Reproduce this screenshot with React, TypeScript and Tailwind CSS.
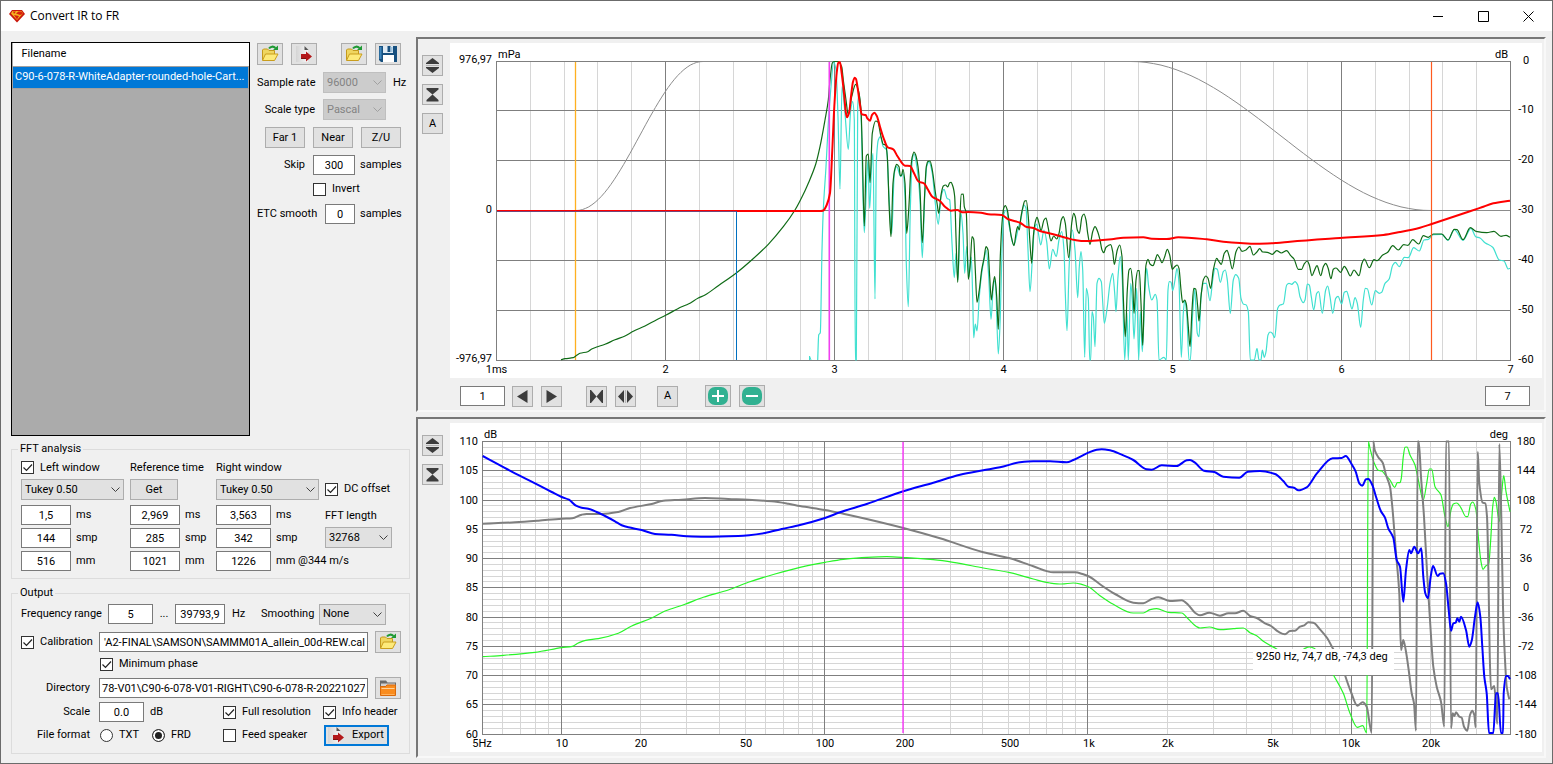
import React, { useState } from "react";

const RED =
  "497,211 800,211 821,211 823.3,210.5 826.7,205 830,193 832.3,150 834.3,106.7 836.7,73 838.3,62.5 840,62.3 841.7,73.3 844,93.3 845.7,111.7 847,117.3 849.3,111.7 851,96.7 853,81.7 854.7,77.7 856,79 857.7,88.3 860,105 861.7,114.3 865.7,115 867.3,118.3 870,120.7 872,115 874.3,112.7 876.7,115.7 880,126.7 883.3,137.3 887.7,147.3 893.3,149.3 897.3,156 905,165.7 910,166 913.3,171.7 918.7,181.7 924,183.3 927.7,189.3 932.3,196.7 939.7,200.7 945,206.7 951,210.7 957.3,210 962.3,212.3 968.3,212 981,212.7 988.3,214.3 1001.7,215 1008.3,219.3 1020,222.7 1026.7,227 1033.3,228 1040,231 1053.3,234.3 1066.7,238 1075,240 1085,241 1100,240.3 1111.7,239.3 1123.3,237.7 1143.3,237.3 1151.7,238.7 1166.7,239 1178.3,237.3 1206.7,239.3 1223.3,241.7 1240,243 1256.7,243.7 1276.7,243 1290,241.7 1340,238 1383.3,235 1400,232 1420,227.7 1431.7,224 1470,211.3 1481.7,207.3 1493.3,203.3 1510,200.7";

const ETC =
  "561,359.7 565,358.7 573.3,357.7 576.7,355.3 580,353.3 587.7,351.7 591.7,349 596.7,347 605,344.3 615,339.7 625,336 633.3,331.3 645,326 656.7,319.7 665.7,315.3 681.7,306.7 688.3,304 698.3,298 705,295 718.3,285.7 736.3,273 751.7,260 768.3,244.3 783.3,226.7 795,210 805,190.7 808.3,183.3 815.7,164.3 820,146.7 825,120 828.3,100 830,80 832.3,63 834,61.5 838,61.5 841.7,66.7 843.3,80 846,100 848.3,115 851.7,96.7 855.7,84.3 858.3,90 861,110 862.3,150 864.3,226 866.3,156 868.3,154 870,182.7 872.3,133.3 875.7,121 877.7,121.7 881,136.7 883.3,144.3 885.7,145 887.3,156.7 889.3,210 891,236.7 893,183.3 895,168.3 896.7,164.3 899,166.7 900.3,175.7 901.7,175 903,169.3 905,183.3 906.7,233.3 908.7,210 911,166.7 912.3,156.7 914,152 915.7,155 918,166.7 920,190 922.3,242.7 924.7,193.3 926.3,166.7 928,161.3 930,161 932.3,170 935,190 937.3,205 938.7,213.3 941.3,193.3 943.3,186 945.7,185 947.7,187 949.7,182.7 951,182.3 953,186.7 954.7,196.7 956,236.7 957.7,282.3 959.7,223.3 961.3,194.3 963.3,194 964.3,206.7 966.3,213 968.3,279.3 970.3,263.3 972,236.7 973.7,239.3 975.3,270 977,302.3 979.3,290 981.7,270 984,258.3 986,246.7 988,250 989.7,276.7 991.3,300 993.3,283.3 994.7,276.7 996.7,296.7 998.3,329.3 1000.3,256.7 1002,223.3 1003.7,208.3 1005.3,205.7 1007.3,210 1009.3,223.3 1011.3,236.7 1014,245.7 1016,233.3 1017.7,226.7 1019.3,230 1021,216.7 1023,206.7 1024.7,201 1026.3,200.7 1028.3,216.7 1030,243.3 1031.7,263.3 1033.3,236.7 1035,223.3 1037,217.3 1039,223.3 1041,230.7 1044,220 1046,218 1048,226.7 1051,241 1053.7,236 1056.7,239 1059,233.3 1061.3,220 1063.3,216.7 1065.3,223.3 1068.7,257.7 1071.7,223.3 1073.7,213.3 1075.3,216.7 1077.3,230 1079.3,233.3 1082,216.7 1084,214 1086,220 1087.7,233.3 1090,244.3 1092.7,231.7 1095,226.7 1097.7,231.7 1100,240 1102,250 1103.7,252.7 1106,247.3 1110.7,244.7 1112.7,251.7 1114.3,264.3 1117.3,250 1119.7,245 1122,256.7 1123.3,296.7 1125.3,336.7 1127.3,290 1129,270 1130.7,268.3 1132.7,283.3 1134,313.3 1136,280 1137.7,270.7 1139.3,270.7 1141,303.3 1142.7,345.3 1144.3,296.7 1146,265 1148,259.3 1150,264 1153,265.7 1155.3,260 1157.3,254.7 1159.3,257.3 1162,262.7 1164.7,256.7 1167.3,249.3 1169.7,255 1172.3,269.3 1174.7,266.7 1177.3,265 1179,268.3 1181,290 1182.7,302.7 1184.7,300 1186.3,304 1188.3,326.7 1190,346.7 1192,310 1193.7,288.3 1195.7,289 1197.7,306.7 1199,321 1201,296.7 1203.3,280 1206,276 1208,278.3 1210.7,288.3 1213.3,270 1216.7,258.3 1219,261.7 1221.3,264.3 1224.3,253.3 1227,250.3 1229.3,256.7 1232.3,269 1236,251.7 1239,247 1242,251.3 1246,250 1250,246.3 1253.3,255 1256.7,252.3 1259.7,248.7 1262.7,252 1267.3,252.3 1272.3,254.3 1276.7,250.7 1281.3,253 1286.7,250.7 1290.7,255.7 1294,259 1298.3,269.3 1301.7,269.3 1304,264.3 1307.3,261 1309.3,265 1312,275.7 1314.3,270.7 1317,265.7 1320.7,275.7 1323.3,266.7 1325.7,263.3 1328,267.7 1331,278.7 1333.3,269.3 1336,268 1340.7,272.3 1344.3,266.3 1346.7,269.3 1350.3,276 1354,270 1359,275.7 1362,263.3 1364.3,259 1369.3,267.7 1374,259.7 1377.3,260.7 1382.7,255 1387.7,252.3 1392.7,245.7 1398.3,250 1403.7,244.7 1408,245.3 1412.7,239.7 1418.7,244 1423.3,235.7 1428.3,237.3 1433.3,234 1441.7,234 1448,240 1454.3,229.3 1457,229.7 1463,239.7 1470.3,227.7 1476,231.3 1486.7,232.7 1494,231.3 1501,236.3 1506,235.3 1510,237.3";

const ETC_RAW =
  "817.7,360 818.7,335 820.3,332.7 822,250 823.3,210 826,166.7 828.3,123.3 831,86.7 833.7,62 836,70 838,116.7 840,189 842,86.7 844.7,110 848.3,149.3 850.7,110 852.7,101.7 854.3,120 855.3,360 856.3,360 857.7,106.7 859,93.3 861,113.3 862.7,183.3 864.3,232.7 867,173.3 868,160 869.7,208.3 871.7,163.3 873,153.3 875,299 876.3,163.3 878.3,140 880.3,136.7 883.3,146.7 886.7,150 888.7,190 891.7,234 894.3,173.3 896.7,166.7 900.7,176.7 903,173.3 905,196.7 906.3,263.3 908.3,306.7 910.3,210 912.3,160 914,154 917.3,170 920,200 922.3,257.7 924.7,196.7 926.7,166.7 929,161.7 932.3,173.3 935.3,203.3 938.3,224.3 941,196.7 944,189.3 947,198.3 949.7,200 952,243.3 954.3,277.7 956,253.3 958,280 960,223.3 961,213.3 963,233.3 964.7,273.3 966.7,246.7 969,276.7 971.3,257 972.7,296.7 973.7,337.7 975.3,324 977,331 979.3,296.7 981.7,273.3 984,260 986.3,250 988.7,276.7 991,319.3 993.3,286.7 995.3,280 998.3,354 1000.3,316.7 1002,250 1004,213.3 1006.3,210 1009.3,226.7 1013.7,245 1018.3,228.3 1021,218.3 1024,205 1026,208.3 1028,250 1030,291.7 1032.3,260 1034.3,230 1036.7,224 1038.7,235 1040.7,245 1044,230 1046.7,241.7 1049.3,269 1052.7,249.3 1056.3,256.7 1059,240 1061.7,231.7 1064,250 1065.3,293.3 1067,330.7 1069.3,263.3 1072.3,230 1075,250 1077.7,297.7 1079.3,266.7 1081,251.7 1082.7,270 1084.7,357.3 1086.3,288.3 1088.3,298.3 1089.7,360 1090.7,360 1092,311.7 1093.3,316.7 1095,346.7 1097,283.3 1099,278.3 1101.3,281.7 1103,306.7 1104.3,323.3 1107.3,306.7 1110,283.3 1112.7,273.3 1114.7,293.3 1116,311.7 1118,276.7 1120.3,256.7 1122.3,280 1124.7,360 1127,313.3 1128.3,360 1130.7,283.3 1132.3,300 1134,339 1136.7,288.3 1138.7,360 1140.3,311.7 1142.3,351.7 1144.7,296.7 1146.7,268.3 1148.7,286.7 1151.7,300 1155.3,294.3 1157,300 1159,360 1164,357.3 1166.3,360 1168,290 1169.3,281.7 1171,282 1172.7,290.7 1175,280 1177,268.3 1179,283.3 1181.3,357.3 1183.3,313.3 1184.7,300.7 1186.7,313.3 1189,360 1190.3,360 1192.7,313.3 1194.7,289.3 1197.3,333.3 1199,336.7 1201.3,293.3 1203.7,283.3 1206.3,283.3 1210,300.7 1212.7,280 1215,268.3 1217.3,269.3 1220.3,282.3 1223.3,271.7 1225.3,270 1227.3,280 1230.3,313.3 1233.3,280 1235.7,274.7 1238.7,278.3 1241,298.3 1243.7,304.3 1246,304.7 1248.3,311.7 1250.3,360 1254.3,360 1257,348.3 1259,360 1261,360 1262.3,350 1264.3,357.3 1266,351.7 1268,335 1270,332 1272.3,333.3 1274.7,337.7 1277.7,308.3 1280,305 1283.3,304 1286.7,285 1289,283.3 1291.7,284.3 1295,281.7 1297.7,285 1300,296.7 1303.3,302.7 1305,300 1307.3,284 1309.3,285 1311.3,296.7 1313.7,310 1316.7,293.3 1318.7,291.7 1322.3,313.3 1325.7,290 1327.7,286 1330,296.7 1332.7,313.3 1335.7,298.3 1338,296.3 1341.7,304 1344.3,292.3 1346.7,291.3 1349,298.3 1352,309 1355,297.7 1357.3,303.3 1360.7,327.3 1363.3,300 1365.3,288.3 1367.3,288.7 1371.7,305 1375.3,290.7 1379.3,293.3 1381.7,292.3 1385,283.3 1389,279.3 1392.7,265.3 1395.3,262.3 1399.3,266.7 1404.3,257.3 1408.3,257.7 1413.7,247.7 1419.3,251 1424,240 1428.3,239.3 1433.3,234.7 1441.7,234.3 1448,240.3 1454.3,229.7 1463,240.3 1471,228.3 1475.7,236.7 1480,238 1485,242.7 1492.7,247.3 1499.3,260 1504,261 1508.3,269 1510,268.3";

const MAGNITUDE =
  "482.7,456 498.3,464.3 515,473.3 535,483.3 551.7,492 561.7,497 569,499.7 576,505.7 581.7,507.7 588.3,508.7 596.7,512 605,516 615,521.3 621.7,525.3 628.3,527.3 641.7,530 655,534 671.7,534.7 686.7,536.3 705,536.7 738.3,536 765,533 781.7,529 800,525 825,518 840,512.3 866.7,504 903.3,491.3 933.3,482.7 960,474.7 983.3,470.3 1000,467.3 1020,462.3 1033.3,461.3 1050,461.3 1066.7,462.3 1073.3,460 1088.3,452.7 1096.7,449.7 1101.7,449.3 1110,450.3 1121.7,454.7 1133.3,460 1146.7,469.3 1151.7,469.7 1161.7,465.3 1176.7,466 1186.7,460.3 1190,460 1195,462.7 1204,470.7 1214.3,472 1223.3,476.7 1239.3,477.7 1247.7,471.7 1260,471 1275,474 1283.3,481 1288.3,486.7 1294,487.7 1298.3,490.3 1306.7,487.3 1316.7,473.7 1332.7,458.3 1341.7,458 1345.7,456 1351.7,464.3 1355.7,471.7 1359.3,483.3 1362.3,485.7 1366,479.3 1368.3,479 1372.3,485 1376,496.7 1380.7,510.7 1385,517.7 1388.3,528.3 1393.3,537.7 1396.7,560 1400,566.7 1403.3,601.7 1406,570 1409.3,550 1411,553.3 1414.3,546.7 1418,553.3 1421.3,548.3 1423.3,576.7 1425.3,593.3 1428,598.3 1430.7,576.7 1433,566 1437.7,576 1440,573.7 1443.3,573.3 1446,583.3 1448.7,610 1451,630.7 1453.3,623.3 1455.7,622.7 1457.3,618.3 1459.3,621.7 1461,616.7 1466,630 1469.3,646.7 1471.7,640.7 1475,616.7 1477.7,602.3 1480.3,616.7 1482.3,646.7 1484.3,676.7 1486.7,693.3 1489,733 1493.3,733 1496,693.3 1498,693.3 1501,733 1503,733 1503.7,693.3 1506,676 1508,676 1510,679.3";

const PHASE =
  "482.7,523.7 515,522.3 538.3,520.7 561.7,518.7 572.3,518.3 581.7,514.7 586.7,514 601.7,514 618.3,512 630,508 651.7,504 663.3,500.7 681.7,499.7 705,498 728.3,499 748.3,499.7 771.7,501.3 788.3,503.7 800,506 825,510 843.3,513.7 866.7,519 903.3,528 940,538.3 983.3,552.3 1010,558.3 1033.3,566.3 1053.3,572.3 1075,572.3 1083.3,574.3 1090,577 1100,584.3 1115,594 1133.3,602.7 1143.3,603.3 1151.7,599 1158.3,597.3 1170,601 1181.7,600.3 1188.3,605 1195,612.7 1200,615.3 1209.3,612.7 1220,615.7 1228.3,613.3 1235,613.3 1243.3,610.7 1250,616 1256.7,618 1265,623.3 1271,626 1278.3,631.7 1285,634.3 1290,631 1295,630.7 1300,626.7 1304.3,625.3 1308.3,622.3 1313.3,622.7 1320,629.3 1327.3,638.3 1333.3,649.3 1341.7,664 1345.3,676 1351,692 1357.3,705.7 1362.7,702.3 1366.7,706.7 1371.7,733 1373.3,441.5 1374.7,450 1378.3,457.3 1382.7,462.7 1386,475 1390,486.7 1392.3,506.7 1396,553.3 1399.3,593.3 1401,650 1403.3,640 1405.7,650 1408.7,670 1411.7,693.3 1414,703.3 1416,730.7 1417.7,441.5 1418.7,441.5 1421,476.7 1424,516.7 1427.3,576.7 1430,620 1433.3,666.7 1436.7,686.7 1441,701.7 1444.3,726.7 1446,441.5 1449,441.5 1451,728.3 1452.7,713.3 1454.3,716 1456,712.3 1459.3,716.7 1461.7,717.7 1464,726.7 1467.3,730.7 1470,715 1472.3,710.7 1474.3,715 1475.7,727.3 1477.7,451.7 1479.3,483.3 1482.7,502.7 1485.3,503.3 1487,516.7 1488.3,566.7 1489.7,653.3 1491,689.3 1494.3,686 1495.7,703.3 1497.3,724 1499.3,444 1501.3,516.7 1503,606.7 1504.7,653.3 1506.7,686.7 1509.3,699.3";

const MIN_PHASE =
  "482.7,656.7 503.3,655.3 535,652.3 561.7,647.7 572.3,646.3 578.3,643 585.7,640.3 598.3,638.7 618.3,633.3 631.7,626 651.7,618 665,611 685,604.3 703.3,597.3 728.3,590 748.3,582.3 775,574 800,567.3 825,562.3 843.3,559.3 866.7,557.3 886.7,556.7 906.7,557.7 933.3,559.7 953.3,562.3 983.3,568 1010,572.7 1033.3,579 1050,583 1061.7,584 1073.3,583 1081.7,584.3 1089.3,587.3 1100,595.7 1113.3,604.3 1133.3,613 1143.3,613 1150,609.7 1156.7,608.7 1168.3,612.3 1181.7,613 1188.3,619 1196.7,626.7 1200,628 1209.3,627 1220,629.7 1233.3,628.7 1243.3,628 1250,632.7 1256.7,635.7 1263.3,641.3 1275,648 1290,656 1304.3,648.7 1309.3,647 1314,648.3 1326.7,663 1334,676 1343.3,693.3 1350,713.3 1357.3,727.3 1362.7,725.7 1366.7,733 1368.3,441.5 1370,448.3 1374.3,463.3 1378.3,470.3 1381.7,471 1386,475.7 1390,480 1394.7,487.3 1397.3,482.7 1400,482.7 1401.3,478.3 1403.3,456.7 1405,447.3 1407,447 1410,455 1415,465 1418.3,480 1423.3,500 1426.7,483.3 1429.3,469 1431.7,469 1435,486.7 1441,495 1445,516.7 1448,526.7 1451,510 1453.3,504 1456.7,503 1460.7,507.3 1466,516.7 1467.7,516.7 1470.7,504 1472.7,502 1476,510 1478.3,536.7 1481,561.7 1483,569.3 1485.7,566 1488.7,564 1490.7,540 1492.7,506.7 1494.3,497.3 1496,501.7 1499.3,521.7 1501.7,493.3 1503.7,475.7 1506,491.7 1510,511.7";

// monotone cubic through the samples, rounds the peaks without overshoot
const curve = (data: string): string => {
  const p = data.split(" ").map((pair) => pair.split(",").map(Number));
  const slope = p
    .slice(1)
    .map((point, i) => (point[1] - p[i][1]) / (point[0] - p[i][0]));
  const tangent = p.map((_, i) => {
    if (i === 0) return slope[0];
    if (i === p.length - 1) return slope[i - 1];
    const a = slope[i - 1];
    const b = slope[i];
    return a * b <= 0 ? 0 : (2 * a * b) / (a + b);
  });
  let path = `M${p[0][0]},${p[0][1]}`;
  for (let i = 1; i < p.length; i++) {
    const [x0, y0] = p[i - 1];
    const [x1, y1] = p[i];
    const dx = (x1 - x0) / 3;
    path += `C${(x0 + dx).toFixed(2)},${(y0 + dx * tangent[i - 1]).toFixed(2)} ${(
      x1 - dx
    ).toFixed(2)},${(y1 - dx * tangent[i]).toFixed(2)} ${x1},${y1}`;
  }
  return path;
};

// half cosine between two x positions
const cosineEdge = (x0: number, x1: number, y0: number, y1: number) => {
  const points: string[] = [];
  for (let i = 0; i <= 40; i++) {
    const t = i / 40;
    const y = y0 + (y1 - y0) * 0.5 * (1 - Math.cos(Math.PI * t));
    points.push(`${x0 + (x1 - x0) * t},${y.toFixed(1)}`);
  }
  return points.join(" ");
};

const WINDOW = `497,210.5 ${cosineEdge(576, 703, 210.5, 61.5)} ${cosineEdge(
  1131,
  1431,
  61.5,
  210.5
)} 1510,210.5`;

const freqToX = (f: number) =>
  Math.round(561.5 + 263.4 * Math.log10(f / 10)) - 0.5;

const freqTicks: number[] = [];
[1, 10, 100, 1000, 10000].forEach((decade) => {
  for (let i = 1; i < 10; i++) {
    const f = decade * i;
    if (f > 5 && f < 39000) freqTicks.push(f);
  }
});

const freqLabels: [string, number][] = [
  ["5Hz", 482],
  ["10", 562],
  ["20", 641],
  ["50", 746],
  ["100", 825],
  ["200", 905],
  ["500", 1010],
  ["1k", 1089],
  ["2k", 1168],
  ["5k", 1273],
  ["10k", 1351],
  ["20k", 1431],
];

const ImpulseChart: React.FC = () => {
  const rows = [61, 110, 160, 210, 260, 310, 360];
  const minor = Array.from({ length: 31 }, (_, i) => i).filter((i) => i % 5);
  return (
    <svg
      viewBox="450 43 1092 335"
      className="block h-auto w-full bg-white text-[11px]"
      role="img"
      aria-label="Impulse response"
    >
      <g stroke="#d6d6d6" shapeRendering="crispEdges">
        {minor.map((i) => {
          const x = Math.round(496 + i * 33.8) + 0.5;
          return <line key={i} x1={x} x2={x} y1="61" y2="360" />;
        })}
      </g>
      <g stroke="#7f7f7f" shapeRendering="crispEdges">
        {rows.map((y) => (
          <line key={y} x1="496" x2="1511" y1={y + 0.5} y2={y + 0.5} />
        ))}
        {[0, 1, 2, 3, 4, 5, 6].map((i) => (
          <line
            key={i}
            x1={496.5 + i * 169}
            x2={496.5 + i * 169}
            y1="61"
            y2="361"
          />
        ))}
      </g>
      <g fill="none" strokeLinejoin="round">
        <polyline points={WINDOW} stroke="#8c8c8c" />
        <line x1="575.5" x2="575.5" y1="62" y2="360" stroke="#ffb020" strokeWidth="1.3" />
        <path d={curve(ETC_RAW)} stroke="#40e0d0" strokeWidth="1.2" />
        <path d="M809.5 360v-4l1.500 4" stroke="#40e0d0" />
        <path d={curve(ETC)} stroke="#0f6b16" strokeWidth="1.2" />
        <line
          x1="829.3"
          x2="829.3"
          y1="62"
          y2="360"
          stroke="#f040f0"
          strokeWidth="1.6"
        />
        <line x1="1431.5" x2="1431.5" y1="62" y2="360" stroke="#ff5a1f" strokeWidth="1.2" />
        <path d={curve(RED)} stroke="#ff0000" strokeWidth="2" />
        <path d="M497 211.500H736.500V360" stroke="#0070c0" />
        <path d="M497 211.500H736" stroke="#c0284c" opacity="0.6" />
      </g>
      <g textAnchor="end">
        <text x="492" y="63">976,97</text>
        <text x="492" y="213">0</text>
        <text x="492" y="362">-976,97</text>
        <text x="1508" y="58">dB</text>
      </g>
      <text x="498" y="58">mPa</text>
      <g textAnchor="middle">
        {["1ms", "2", "3", "4", "5", "6", "7"].map((label, i) => (
          <text key={label} x={496.5 + i * 169} y="373">
            {label}
          </text>
        ))}
        {["0", "-10", "-20", "-30", "-40", "-50", "-60"].map((label, i) => (
          <text key={label} x="1526" y={rows[i] + 3}>
            {label}
          </text>
        ))}
      </g>
    </svg>
  );
};

const ResponseChart: React.FC = () => {
  const rowY = (db: number) => Math.round(441 + (110 - db) * 5.853) + 0.5;
  const levels = Array.from({ length: 51 }, (_, i) => 110 - i);
  const majors = levels.filter((db) => db % 5 === 0);
  return (
    <svg
      viewBox="450 423 1092 329"
      className="block h-auto w-full bg-white text-[11px]"
      role="img"
      aria-label="Frequency response"
    >
      <g stroke="#d6d6d6" shapeRendering="crispEdges">
        {levels.map((db) => (
          <line key={db} x1="482" x2="1510" y1={rowY(db)} y2={rowY(db)} />
        ))}
        {freqTicks.map((f) => (
          <line key={f} x1={freqToX(f)} x2={freqToX(f)} y1="441" y2="734" />
        ))}
      </g>
      <g stroke="#7f7f7f" shapeRendering="crispEdges">
        {majors.map((db) => (
          <line key={db} x1="482" x2="1511" y1={rowY(db)} y2={rowY(db)} />
        ))}
        {[10, 100, 1000, 10000].map((f) => (
          <line key={f} x1={freqToX(f)} x2={freqToX(f)} y1="441" y2="734" />
        ))}
        <line x1="482.5" x2="482.5" y1="441" y2="735" />
        <line x1="1510.5" x2="1510.5" y1="441" y2="735" />
      </g>
      <g fill="none" strokeLinejoin="round">
        <path d={curve(MIN_PHASE)} stroke="#28f528" strokeWidth="1.2" />
        <path d={curve(PHASE)} stroke="#7f7f7f" strokeWidth="2" />
        <path d={curve(MAGNITUDE)} stroke="#0000ff" strokeWidth="2" />
        <line
          x1="903"
          x2="903"
          y1="442"
          y2="733"
          stroke="#ff00ff"
          strokeWidth="2"
          opacity="0.55"
        />
      </g>
      <rect x="1253" y="649" width="141" height="26" fill="#fff" />
      <text x="1256" y="660">9250 Hz, 74,7 dB, -74,3 deg</text>
      <text x="484" y="438">dB</text>
      <text x="1508" y="438" textAnchor="end">
        deg
      </text>
      {majors.map((db, i) => (
        <g key={db}>
          <text x="478" y={rowY(db) + 3} textAnchor="end">
            {db}
          </text>
          <text x="1526" y={rowY(db) + 3} textAnchor="middle">
            {180 - i * 36}
          </text>
        </g>
      ))}
      {freqLabels.map(([label, x]) => (
        <text key={label} x={x} y="747" textAnchor="middle">
          {label}
        </text>
      ))}
    </svg>
  );
};

const OpenIcon = () => (
  <svg width="18" height="18" viewBox="0 0 18 18" fill="none">
    <path d="M1.500 15V5l1-1h4L8 5.500h5.500V9" fill="#efd660" stroke="#c49a1c" />
    <path d="M1.500 15.500L4.500 9H17l-3.500 6.500z" fill="#fdea7a" stroke="#c99d1d" />
    <path d="M8 3.500C9.500 1.200 12.500 1 14.500 3" stroke="#1f9a35" strokeWidth="2" />
    <path d="M12 5h5V.5z" fill="#1f9a35" />
  </svg>
);

const ExportIcon = () => (
  <svg width="18" height="18" viewBox="0 0 18 18" fill="none">
    <defs>
      <linearGradient id="page" x1="0" y1="0" x2="1" y2="0">
        <stop offset="0" stopColor="#d4d4d4" />
        <stop offset="1" stopColor="#f6f6f6" />
      </linearGradient>
    </defs>
    <path d="M1 1h9l3 4v12H1z" fill="url(#page)" />
    <path d="M9.500 1v4h4z" fill="#555" />
    <path d="M6 9h5V6.500l6 5-6 5V14H6z" fill="#b3181a" />
    <path d="M6 13.500h5" stroke="#7c1010" />
  </svg>
);

const SaveIcon = () => (
  <svg width="20" height="18" viewBox="0 0 20 18">
    <path d="M1 1h18v16H3l-2-2z" fill="#17507f" />
    <path d="M5 1h10v7H5z" fill="#dfeaf3" />
    <path d="M9.500 1h3v6h-3z" fill="#17507f" />
    <path d="M5 10h11v7H5z" fill="#fff" />
    <path d="M1.500 2h2v12h-2z" fill="#3f86bd" />
    <path d="M12.500 2l2 0v5h-2z" fill="#9cc3df" />
  </svg>
);

const DirectoryIcon = () => (
  <svg width="18" height="18" viewBox="0 0 18 18" fill="none">
    <path d="M1 1.500h6l1.500 2H17V8H1z" fill="#6b6b6b" />
    <path d="M2 4.500h14V7H2z" fill="#d0d0d0" />
    <path d="M1.500 7.500h5L8 6h8.500v10.500h-15z" fill="#f98c1e" stroke="#d9690b" />
    <path d="M2.500 9.500h13" stroke="#ffd29b" />
    <path d="M2.500 15.500h13" stroke="#ffb15a" />
  </svg>
);

const UpDownIcon = () => (
  <svg width="15" height="17" viewBox="0 0 15 17" fill="#3c3c3c">
    <path d="M7.500 1L14 6v1H1V6zM1 10h13v1l-6.500 5L1 11z" />
    <path d="M1 8.500h13" stroke="#b5b5b5" />
  </svg>
);

const SqueezeIcon = () => (
  <svg width="15" height="17" viewBox="0 0 15 17" fill="#3c3c3c">
    <path d="M1.500 2h12v1.500l-6 5-6-5zM7.500 8.500l6 5.500v1.500h-12V14z" />
  </svg>
);

const GemIcon = () => (
  <svg width="16" height="14" viewBox="0 0 16 14">
    <path d="M3 1h10l3 4-8 8.500L0 5z" fill="#c9180c" />
    <path d="M3.500 2h9l1.500 2.500L8 11 2 4.500z" fill="#f4b51e" />
    <path d="M4 2.500h3L5 5zM9.500 2.500h3L14 5l-3 1-4-1.500zM5 6l5 1-2 3.500z" fill="#d8200f" />
  </svg>
);

interface ButtonProps {
  label: string;
  className: string;
  children?: React.ReactNode;
}

const Button: React.FC<ButtonProps> = ({ label, className, children }) => (
  <button
    aria-label={label}
    className={`flex shrink-0 items-center justify-center border border-[#adadad] bg-[#e1e1e1] ${className}`}
  >
    {children || label}
  </button>
);

interface FieldProps {
  label: string;
  value: string;
  className: string;
}

const Field: React.FC<FieldProps> = ({ label, value, className }) => {
  const [text, setText] = useState<string>(value);
  return (
    <input
      type="text"
      aria-label={label}
      value={text}
      onChange={(e) => setText(e.target.value)}
      className={`h-5 border border-[#7a7a7a] bg-white px-[2px] ${className}`}
    />
  );
};

interface DropdownProps {
  label: string;
  value: string;
  className: string;
  disabled?: boolean;
}

const Dropdown: React.FC<DropdownProps> = ({
  label,
  value,
  className,
  disabled,
}) => (
  <div className={`relative shrink-0 ${className}`}>
    <select
      aria-label={label}
      disabled={disabled}
      className="h-[21px] w-full appearance-none border border-[#adadad] bg-[#e1e1e1] px-[3px] disabled:border-[#bfbfbf] disabled:bg-[#cccccc] disabled:text-[#838383] disabled:opacity-100"
    >
      <option>{value}</option>
    </select>
    <svg
      width="9"
      height="6"
      viewBox="0 0 9 6"
      fill="none"
      stroke={disabled ? "#a0a0a0" : "#404040"}
      className="pointer-events-none absolute top-2 right-1"
    >
      <path d="M.5.5l4 4 4-4" />
    </svg>
  </div>
);

interface CheckProps {
  label: string;
  checked?: boolean;
  className?: string;
}

const Check: React.FC<CheckProps> = ({ label, checked, className = "" }) => {
  const [on, setOn] = useState<boolean>(!!checked);
  return (
    <label className={`flex items-center gap-[6px] whitespace-nowrap ${className}`}>
      <span className="relative h-[13px] w-[13px] shrink-0">
        <input
          type="checkbox"
          checked={on}
          onChange={() => setOn(!on)}
          className="block h-[13px] w-[13px] appearance-none border border-[#333] bg-white"
        />
        {on && (
          <svg
            viewBox="0 0 13 13"
            fill="none"
            stroke="#222"
            strokeWidth="1.200"
            className="pointer-events-none absolute inset-0"
          >
            <path d="M2.500 6.500l3 3 5.500-6" />
          </svg>
        )}
      </span>
      {label}
    </label>
  );
};

const Radio: React.FC<{ label: string; checked?: boolean }> = ({
  label,
  checked,
}) => (
  <label className="flex w-[52px] items-center gap-[6px]">
    <input
      type="radio"
      name="format"
      defaultChecked={checked}
      className="h-[13px] w-[13px] appearance-none rounded-full border border-[#333] bg-white checked:bg-[#222] checked:shadow-[inset_0_0_0_2px_#fff]"
    />
    {label}
  </label>
);

const Measures: React.FC<{ name: string; values: string[]; width: string }> = ({
  name,
  values,
  width,
}) => (
  <div className="mt-[5px] flex flex-col gap-[3px]">
    {["ms", "smp", "mm"].map((unit, i) => (
      <div key={unit} className="flex h-5 items-center gap-[5px]">
        <Field
          label={`${name} ${unit}`}
          value={values[i]}
          className={`${width} text-center`}
        />
        <span className="whitespace-nowrap">
          {unit === "mm" && name === "Right window" ? "mm @344 m/s" : unit}
        </span>
      </div>
    ))}
  </div>
);

const App: React.FC = () => {
  return (
    <div
      className="flex min-h-screen flex-col border border-[#6b6b6b] bg-[#f0f0f0] text-[11px] leading-[14px] text-black"
      style={{ fontFamily: 'Roboto, "Liberation Sans", sans-serif' }}
    >
      <header className="flex h-[30px] items-center bg-white pl-2">
        <GemIcon />
        <h1 className="ml-[5px] flex-1 font-['Open_Sans',sans-serif] text-[12px]">
          Convert IR to FR
        </h1>
        <div className="flex pr-px text-black">
          <button aria-label="Minimize" className="flex w-[45px] justify-center">
            <svg width="11" height="11" stroke="currentColor">
              <path d="M0 5.500h10" />
            </svg>
          </button>
          <button aria-label="Maximize" className="flex w-[45px] justify-center">
            <svg width="11" height="11" fill="none" stroke="currentColor">
              <path d="M.5.5h10v10H.5z" />
            </svg>
          </button>
          <button aria-label="Close" className="flex w-[45px] justify-center">
            <svg width="11" height="11" stroke="currentColor">
              <path d="M.5.5l10 10M10.500.5l-10 10" />
            </svg>
          </button>
        </div>
      </header>

      <main className="flex flex-1">
        <div className="w-[415px] shrink-0 pt-[11px] pr-[6px] pl-[10px]">
          <div className="flex gap-[7px]">
            {/* file list */}
            <div className="h-[394px] w-[239px] shrink-0 border border-black bg-[#ababab]">
              <table className="w-full table-fixed border-collapse text-left">
                <thead>
                  <tr>
                    <th className="h-[23px] border-b border-[#a0a0a0] bg-white pl-[9px] font-normal">
                      Filename
                    </th>
                  </tr>
                </thead>
                <tbody>
                  <tr>
                    <td className="h-[22px] border border-t-0 border-[#a0a0a0] bg-[#0078d7] pl-[2px] whitespace-nowrap text-white">
                      C90-6-078-R-WhiteAdapter-rounded-hole-Cart...
                    </td>
                  </tr>
                </tbody>
              </table>
            </div>
            {/* import settings */}
            <div className="flex flex-1 flex-col pt-px">
              <div className="flex gap-2">
                <Button label="Open" className="h-[22px] w-[26px]">
                  <OpenIcon />
                </Button>
                <Button label="Export list" className="h-[22px] w-[26px]">
                  <ExportIcon />
                </Button>
                <Button label="Load" className="ml-4 h-[22px] w-[26px]">
                  <OpenIcon />
                </Button>
                <Button label="Save" className="h-[22px] w-[26px]">
                  <SaveIcon />
                </Button>
              </div>
              <div className="mt-[7px] flex items-center">
                <span className="w-[58px] text-right whitespace-nowrap">Sample rate</span>
                <Dropdown
                  label="Sample rate"
                  value="96000"
                  disabled
                  className="ml-2 w-[63px]"
                />
                <span className="ml-[7px]">Hz</span>
              </div>
              <div className="mt-[6px] flex items-center">
                <span className="w-[58px] text-right">Scale type</span>
                <Dropdown
                  label="Scale type"
                  value="Pascal"
                  disabled
                  className="ml-2 w-[63px]"
                />
              </div>
              <div className="mt-[7px] flex gap-2 pl-2">
                <Button label="Far 1" className="h-[21px] w-[40px]" />
                <Button label="Near" className="h-[21px] w-[40px]" />
                <Button label="Z/U" className="h-[21px] w-[40px]" />
              </div>
              <label className="mt-[7px] flex items-center">
                <span className="w-12 text-right">Skip</span>
                <Field
                  label="Skip samples"
                  value="300"
                  className="mr-[5px] ml-2 w-[42px] text-center"
                />
                samples
              </label>
              <Check label="Invert" className="mt-[7px] ml-14" />
              <label className="mt-2 flex items-center">
                <span className="w-[60px] text-right whitespace-nowrap">ETC smooth</span>
                <Field
                  label="ETC smooth samples"
                  value="0"
                  className="mr-[5px] ml-2 w-[30px] text-center"
                />
                samples
              </label>
            </div>
          </div>

          <fieldset className="mt-[6px] border border-[#dcdcdc] pr-2 pb-[7px] pl-[9px]">
            <legend className="-ml-[3px] px-[2px]">FFT analysis</legend>
            <div className="flex gap-[6px]">
              <div className="w-[103px]">
                <div className="flex h-[23px] items-center">
                  <Check label="Left window" checked />
                </div>
                <Dropdown label="Left window type" value="Tukey 0.50" className="w-[103px]" />
                <Measures
                  name="Left window"
                  values={["1,5", "144", "516"]}
                  width="w-[50px]"
                />
              </div>
              <div className="w-20">
                <div className="flex h-[23px] items-center whitespace-nowrap">
                  Reference time
                </div>
                <Button label="Get" className="h-[21px] w-12" />
                <Measures
                  name="Reference time"
                  values={["2,969", "285", "1021"]}
                  width="w-[50px]"
                />
              </div>
              <div className="w-[103px]">
                <div className="flex h-[23px] items-center">Right window</div>
                <Dropdown label="Right window type" value="Tukey 0.50" className="w-[103px]" />
                <Measures
                  name="Right window"
                  values={["3,563", "342", "1226"]}
                  width="w-[55px]"
                />
              </div>
              <div className="pt-[23px]">
                <div className="flex h-5 items-center">
                  <Check label="DC offset" checked />
                </div>
                <div className="mt-[10px] mb-1">FFT length</div>
                <Dropdown label="FFT length" value="32768" className="w-[67px]" />
              </div>
            </div>
          </fieldset>

          <fieldset className="mt-[7px] border border-[#dcdcdc] pt-[3px] pr-[7px] pb-[7px] pl-[9px]">
            <legend className="-ml-[3px] px-[2px]">Output</legend>
            <div className="flex h-[22px] items-center">
              <span className="w-[87px]">Frequency range</span>
              <Field label="From" value="5" className="w-[45px] text-center" />
              <span className="w-[22px] text-center">...</span>
              <Field label="To" value="39793,9" className="w-[50px] text-center" />
              <span className="ml-[7px] w-[29px]">Hz</span>
              <span className="w-[58px]">Smoothing</span>
              <Dropdown label="Smoothing" value="None" className="w-[67px]" />
            </div>
            <div className="mt-[6px] flex h-[22px] items-center">
              <Check label="Calibration" checked className="w-[78px]" />
              <Field
                label="Calibration file"
                value="'A2-FINAL\SAMSON\SAMMM01A_allein_00d-REW.cal"
                className="w-[269px] text-right"
              />
              <Button label="Open calibration" className="ml-[7px] h-[22px] w-[26px]">
                <OpenIcon />
              </Button>
            </div>
            <div className="flex h-[22px] items-center pl-[79px]">
              <Check label="Minimum phase" checked />
            </div>
            <div className="mt-[2px] flex h-[22px] items-center">
              <span className="w-[69px] text-right">Directory</span>
              <Field
                label="Directory"
                value="78-V01\C90-6-078-V01-RIGHT\C90-6-078-R-20221027"
                className="ml-[9px] w-[269px] text-right"
              />
              <Button label="Browse directory" className="ml-[7px] h-[22px] w-[26px]">
                <DirectoryIcon />
              </Button>
            </div>
            <div className="mt-[2px] flex h-[22px] items-center">
              <span className="w-[69px] text-right">Scale</span>
              <Field label="Scale" value="0.0" className="ml-[9px] w-[45px] text-center" />
              <span className="ml-[6px] w-[73px]">dB</span>
              <Check label="Full resolution" checked className="w-[100px]" />
              <Check label="Info header" checked />
            </div>
            <div className="mt-px flex h-[22px] items-center">
              <span className="mr-[10px] w-[69px] text-right">File format</span>
              <div className="flex w-[123px]">
                <Radio label="TXT" />
                <Radio label="FRD" checked />
              </div>
              <Check label="Feed speaker" className="w-[101px]" />
              <button className="flex h-[21px] w-[65px] items-center gap-[7px] border-2 border-[#0078d7] bg-[#e1e1e1] pl-px">
                <ExportIcon />
                Export
              </button>
            </div>
          </fieldset>
        </div>

        <div className="flex min-w-0 flex-1 flex-col gap-[5px] pt-[6px] pr-[6px]">
          <section className="flex gap-[7px] border-2 border-t-[#777] border-r-[#f8f8f8] border-b-[#f8f8f8] border-l-[#777] pt-1 pr-[2px] pb-[3px] pl-1">
            <div className="flex w-[21px] flex-col gap-2 pt-3">
              <Button label="Expand amplitude" className="h-[21px] w-[21px]">
                <UpDownIcon />
              </Button>
              <Button label="Shrink amplitude" className="h-[21px] w-[21px]">
                <SqueezeIcon />
              </Button>
              <Button label="A" className="h-[21px] w-[21px]" />
            </div>
            <div className="min-w-0 flex-1">
              <ImpulseChart />
              <div className="mt-[7px] flex items-center pr-3 pl-[10px]">
                <Field label="Start time" value="1" className="w-[45px] text-center" />
                <Button label="Move left" className="ml-[7px] h-[21px] w-[21px]">
                  <svg width="15" height="15" fill="#3c3c3c">
                    <path d="M2 7.500L12.500 1v13z" />
                  </svg>
                </Button>
                <Button label="Move right" className="ml-2 h-[21px] w-[21px]">
                  <svg width="15" height="15" fill="#3c3c3c">
                    <path d="M13 7.500L2.500 1v13z" />
                  </svg>
                </Button>
                <Button label="Shrink time" className="ml-6 h-[21px] w-[21px]">
                  <svg width="15" height="15" fill="#3c3c3c">
                    <path d="M1 1h1l5.500 6.500L13 1h1v13h-1L7.500 7.500 2 14H1z" />
                  </svg>
                </Button>
                <Button label="Expand time" className="ml-2 h-[21px] w-[21px]">
                  <svg width="17" height="15" fill="#3c3c3c">
                    <path d="M1 7.500L7 1v13zM16 7.500L10 1v13z" />
                    <path d="M8.500 1v13" stroke="#b5b5b5" />
                  </svg>
                </Button>
                <Button label="A" className="ml-[21px] h-[21px] w-[21px]" />
                <Button label="Zoom in" className="ml-[27px] h-[22px] w-[26px]">
                  <svg width="20" height="18" viewBox="0 0 20 18">
                    <rect width="20" height="18" rx="7" fill="#31b191" />
                    <path d="M4 9h12M10 3v12" stroke="#fff" strokeWidth="2" />
                  </svg>
                </Button>
                <Button label="Zoom out" className="ml-2 h-[22px] w-[26px]">
                  <svg width="20" height="18" viewBox="0 0 20 18">
                    <rect width="20" height="18" rx="7" fill="#31b191" />
                    <path d="M4 9h12" stroke="#fff" strokeWidth="2" />
                  </svg>
                </Button>
                <Field
                  label="End time"
                  value="7"
                  className="ml-auto w-[45px] text-center"
                />
              </div>
            </div>
          </section>

          <section className="flex gap-[7px] border-2 border-t-[#777] border-r-[#f8f8f8] border-b-[#f8f8f8] border-l-[#777] py-1 pr-[2px] pl-1">
            <div className="flex w-[21px] flex-col gap-2 pt-3">
              <Button label="Expand level" className="h-[21px] w-[21px]">
                <UpDownIcon />
              </Button>
              <Button label="Shrink level" className="h-[21px] w-[21px]">
                <SqueezeIcon />
              </Button>
            </div>
            <div className="min-w-0 flex-1">
              <ResponseChart />
            </div>
          </section>
        </div>
      </main>
    </div>
  );
};

export default App;
